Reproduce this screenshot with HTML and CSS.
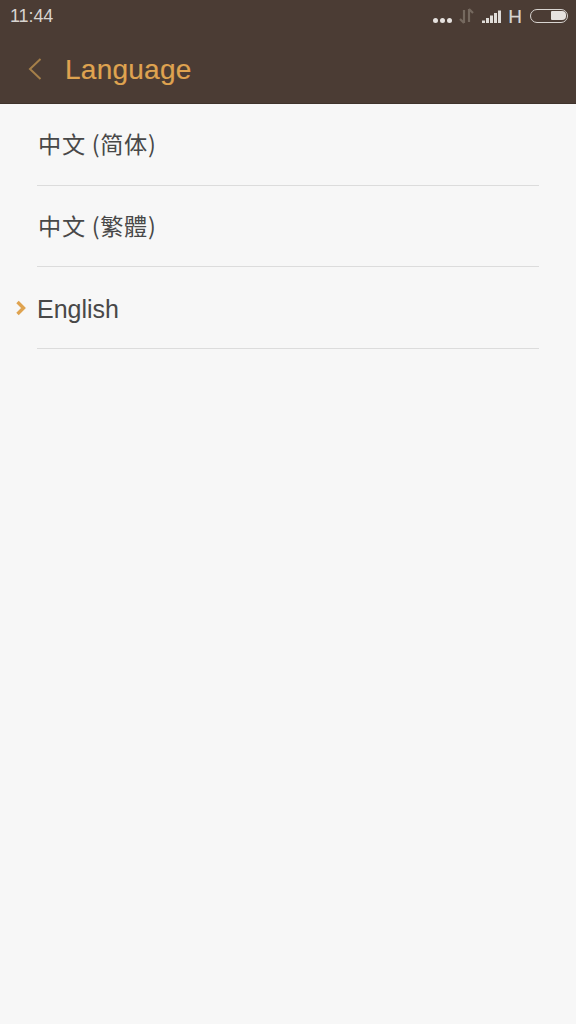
FILE: index.html
```html
<!DOCTYPE html>
<html lang="en">
<head>
<meta charset="utf-8">
<title>Language</title>
<link rel="stylesheet" href="styles.css">
</head>
<body>
<header class="top">
  <div class="status">
    <span class="time">11:44</span>
    <div class="status-icons">
      <span class="dots"><i></i><i></i><i></i></span>
      <svg class="data" width="15" height="16" viewBox="0 0 15 16"><path d="M5 15V2M5 15L1 11M10 1V14M10 1L14 5" fill="none" stroke="#75695f" stroke-width="2.200"/></svg>
      <svg class="signal" width="20" height="14" viewBox="0 0 20 14"><g fill="#e0dcd8"><rect x="0" y="10.500" width="3" height="2.500"/><rect x="4" y="8" width="3" height="5"/><rect x="8" y="5.500" width="3" height="7.500"/><rect x="12" y="3" width="3" height="10"/><rect x="16" y="0.500" width="3" height="12.500"/></g></svg>
      <span class="net">H</span>
      <span class="battery"><span class="level"></span></span>
    </div>
  </div>
  <div class="bar">
    <svg class="back" width="14" height="22" viewBox="0 0 14 22"><path d="M12.500 1L2 11L12.500 21" fill="none" stroke="#a57f49" stroke-width="2"/></svg>
    <h1 class="title">Language</h1>
  </div>
</header>
<ul class="list">
  <li class="item"><span class="label cjk">中文 (简体)</span></li>
  <li class="item"><span class="label cjk tc">中文 (繁體)</span></li>
  <li class="item selected">
    <svg class="mark" width="11" height="16" viewBox="0 0 11 16"><path d="M2.500 2L8.500 8L2.500 14" fill="none" stroke="#dfa350" stroke-width="3.400"/></svg>
    <span class="label latin">English</span>
  </li>
</ul>
</body>
</html>
```
FILE: styles.css
```css
* { box-sizing: border-box; }
html, body { margin: 0; padding: 0; }
body {
  width: 576px;
  height: 1024px;
  overflow: hidden;
  background: #f7f7f7;
  font-family: "Liberation Sans", "Noto Sans CJK SC", sans-serif;
}
.top {
  height: 104px;
  background: #4b3c34;
  border-bottom: 1px solid #3f332c;
}
.status {
  height: 33px;
  display: flex;
  align-items: center;
  justify-content: space-between;
  padding: 0 8px 0 10px;
}
.time { font-size: 18px; color: #d8d4d0; letter-spacing: -0.100px; }
.status-icons { display: flex; align-items: center; }
.dots { display: flex; gap: 2px; margin-top: 8px; margin-right: 7px; }
.dots i { width: 5px; height: 5px; border-radius: 50%; background: #e6e2df; }
.data { margin-right: 7px; margin-top: -2px; }
.signal { margin-right: 6px; margin-left: 1px; }
.net { font-size: 19px; color: #d8d4d0; margin-right: 8px; -webkit-text-stroke: 0.200px #d8d4d0; }
.battery {
  width: 38px;
  height: 14px;
  margin-top: -2px;
  border: 1.500px solid #d8d4d0;
  border-radius: 7px;
  display: flex;
  justify-content: flex-end;
  padding: 1.500px;
}
.level { width: 15px; background: #e6e2df; border-radius: 1px 4px 4px 1px; }
.bar {
  height: 70px;
  display: flex;
  align-items: center;
  padding-left: 28px;
}
.back { margin-right: 23px; margin-top: 1px; }
.title {
  margin: 3px 0 0;
  font-size: 28px;
  font-weight: 400;
  color: #dfa350;
  letter-spacing: 0.250px;
  -webkit-text-stroke: 0.200px #dfa350;
}
.list {
  list-style: none;
  margin: 0;
  padding: 0 37px 0 37px;
}
.item {
  position: relative;
  height: 81.700px;
  display: flex;
  align-items: center;
  border-bottom: 1px solid #dcdcdc;
}
.label { font-size: 25px; color: #484848; }
.cjk {
  font-family: "Noto Sans CJK SC", sans-serif;
  font-size: 23.200px;
  font-weight: 400;
  letter-spacing: 0.700px;
  margin: -2px 0 0 1px;
}
.tc { font-family: "Noto Sans CJK TC", sans-serif; }
.latin { margin-top: 3px; }
.mark { position: absolute; left: -22px; top: 33px; }
```
